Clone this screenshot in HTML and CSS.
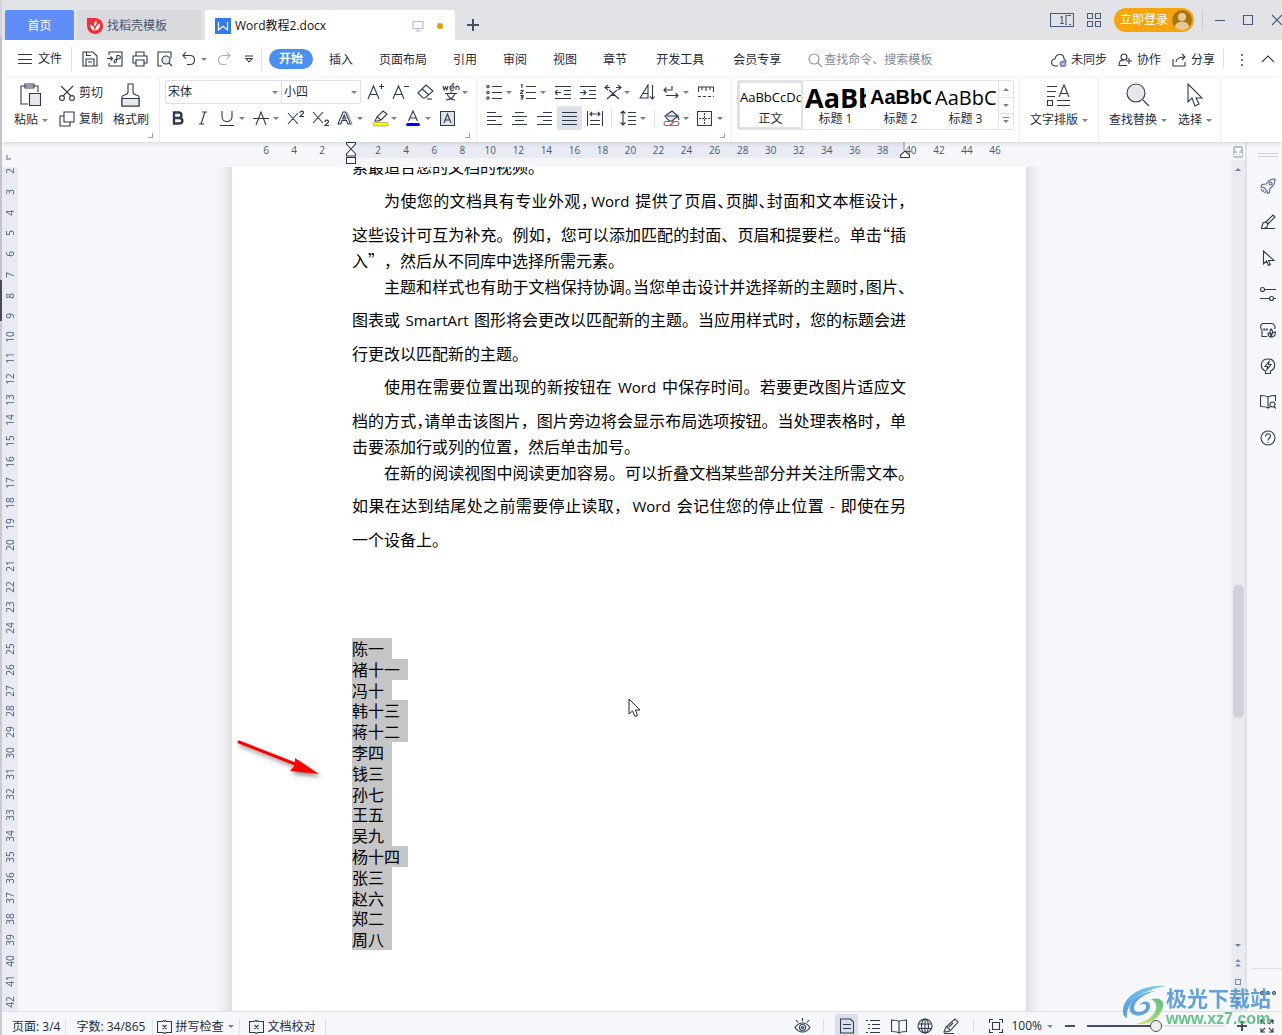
FILE: index.html
```html
<!DOCTYPE html>
<html lang="zh-CN">
<head>
<meta charset="utf-8">
<title>Word教程2.docx</title>
<meta name="viewport" content="width=device-width, initial-scale=1">
<link rel="stylesheet" href="styles.css">
</head>
<body>
<div class="app">

<header class="titlebar">
  <nav class="tabs" aria-label="文档标签">
    <button class="tab tab-home">首页</button>
    <button class="tab tab-store">
      <svg class="logo" width="16" height="16" viewBox="0 0 16 16"><path d="M0 0h8a8 8 0 1 1-8 8z" fill="#fa2c37"/><path d="M7.600 13C4.500 12 3 9.600 3.400 6.600 6 7.500 7.600 9.600 7.600 13zM8.300 12.600C8.300 9.500 9.600 7 13 5.300c.4 4-1.300 6.500-4.700 7.300zM7.600 8.600C6.600 6 7.200 3.800 9.200 2.600c1 2.400.4 4.400-1.600 6z" fill="#fff"/></svg>
      <span>找稻壳模板</span>
    </button>
    <button class="tab tab-doc">
      <svg class="logo" width="16" height="16" viewBox="0 0 16 16"><rect width="16" height="16" fill="#2f7bf0"/><path d="M3.500 4v8l4.500-3.700 4.500 3.700V4" fill="none" stroke="#fff" stroke-width="1.200"/></svg>
      <span class="doc-name">Word教程2.docx</span>
      <svg class="i screen" width="12" height="12" viewBox="0 0 12 12"><path d="M1 1.500h10v7H1zM6 8.500V11M3.500 11h5"/></svg>
      <span class="unsaved"></span>
    </button>
    <button class="new-tab" aria-label="新建标签"><svg class="i bold-line" width="12" height="12" viewBox="0 0 12 12"><path d="M6 0v12M0 6h12"/></svg></button>
  </nav>
  <div class="window-tools">
    <button class="bare" aria-label="窗口排列"><svg class="i" width="24" height="14" viewBox="0 0 24 14"><path d="M.5.500h23v13H.5zM17 2.500h-1v9h1M21 2.500h-3.500M21 11.500h-2M10.500 4.500l1.500-1v7M10 10.500h4"/></svg></button>
    <button class="bare" aria-label="应用"><svg class="i" width="14" height="14" viewBox="0 0 14 14"><path d="M.5.500h5v5h-5zM8.500.500h5v5h-5zM.5 8.500h5v5h-5zM8.500 8.500h5v5h-5z"/></svg></button>
    <button class="login"><span>立即登录</span>
      <svg width="20" height="20" viewBox="0 0 20 20"><circle cx="10" cy="10" r="10" fill="#a8740c"/><circle cx="10" cy="7" r="4" fill="#e6c893"/><path d="M3 17c0-7 14-7 14 0-4 4-10 4-14 0z" fill="#e6c893"/></svg></button>
    <span class="win-sep"></span>
    <button class="win" aria-label="最小化"><svg class="i" width="12" height="12" viewBox="0 0 12 12"><path d="M1 6.500h10"/></svg></button>
    <button class="win" aria-label="最大化"><svg class="i" width="12" height="12" viewBox="0 0 12 12"><path d="M1.500 1.500h9v9h-9z"/></svg></button>
    <button class="win" aria-label="关闭"><svg class="i" width="12" height="12" viewBox="0 0 12 12"><path d="M1 1l10 10M11 1L1 11"/></svg></button>
  </div>
</header>

<div class="menubar">
  <button class="file-menu"><svg class="i" width="14" height="12" viewBox="0 0 14 12"><path d="M0 1.500h14M0 6.500h14M0 10.500h14"/></svg><span>文件</span></button>
  <div class="quick">
    <button class="tool" aria-label="保存"><svg class="i" width="16" height="16" viewBox="0 0 16 16"><path d="M1 1h10l4 4v10H1zM4 15V8h8v7M4.500 1v3.500H9M6 11h4"/></svg></button>
    <button class="tool" aria-label="输出为PDF"><svg class="i" width="16" height="16" viewBox="0 0 16 16"><path d="M2 4V1h13v14H2v-3M0 7.500h5.500M3.500 5.500l2 2-2 2M7.500 12c2 0 2.500-4 2.500-7.500h1.500c2.500 0 2.500 3.500 0 3.500C8 8 6 9.500 7.500 12"/></svg></button>
    <button class="tool" aria-label="打印"><svg class="i" width="16" height="16" viewBox="0 0 16 16"><path d="M4 5V1h8v4M4 12H1V5h14v7h-3M4 9h8v6H4z"/></svg></button>
    <button class="tool" aria-label="打印预览"><svg class="i" width="16" height="16" viewBox="0 0 16 16"><path d="M5 15H1V1h13v6"/><circle cx="9" cy="9" r="4" fill="#e6e8ec"/><path d="M12 12l3 3"/></svg></button>
    <button class="tool split" aria-label="撤销"><svg class="i" width="16" height="16" viewBox="0 0 16 16"><path d="M5 1L2 4.500 5 8M2 4.500h7c6 0 6 9 0 9H6"/></svg><span class="caret"></span></button>
    <button class="tool muted" aria-label="恢复"><svg class="i" width="16" height="16" viewBox="0 0 16 16"><path d="M11 1l3 3.500L11 8M14 4.500H7c-6 0-6 9 0 9h3"/></svg></button>
    <button class="tool" aria-label="更多"><svg class="i" width="10" height="8" viewBox="0 0 10 8"><path d="M1 1h8M2 3.500h6L5 7z"/></svg></button>
  </div>
  <nav class="ribbon-tabs" aria-label="功能区">
    <button class="active">开始</button><button>插入</button><button>页面布局</button><button>引用</button><button>审阅</button><button>视图</button><button>章节</button><button class="spaced">开发工具</button><button class="spaced">会员专享</button>
  </nav>
  <label class="search"><svg class="i" width="14" height="14" viewBox="0 0 14 14"><circle cx="6" cy="6" r="5"/><path d="M10 10l4 4"/></svg><input type="search" placeholder="查找命令、搜索模板" aria-label="查找命令、搜索模板"></label>
  <div class="share-tools">
    <button><svg class="i" width="16" height="14" viewBox="0 0 16 14"><path d="M7 13H4c-5-1-4-7 0-7C5 0 13 0 13 6c1 .500 2 1.500 2 3"/><circle cx="12" cy="11" r="3.500" fill="#7d8db0" stroke="none"/><path d="M10.500 11h3" stroke="#fff"/></svg><span>未同步</span></button>
    <button><svg class="i" width="15" height="14" viewBox="0 0 15 14"><circle cx="6" cy="4" r="3"/><path d="M9 12.500H1c0-5 2-5.500 5-5.500M11 5v6M8 8h6"/></svg><span>协作</span></button>
    <button><svg class="i" width="15" height="14" viewBox="0 0 15 14"><path d="M1 6v7h12V9M4 9c0-3 3-5 9-5M10 1l3 3-3 3"/></svg><span>分享</span></button>
    <button class="more" aria-label="更多选项"><svg width="2" height="12" viewBox="0 0 2 12"><path d="M0 0h2v2H0zM0 5h2v2H0zM0 10h2v2H0z" fill="#707a8c"/></svg></button>
    <button class="collapse" aria-label="收起功能区"><svg class="i" width="14" height="8" viewBox="0 0 14 8"><path d="M1 7l6-6 6 6"/></svg></button>
  </div>
</div>

<div class="ribbon">
  <section class="group clipboard">
    <button class="big"><svg class="i" width="22" height="24" viewBox="0 0 22 24"><path d="M8 21H1V3h17v6M5 1h9v4H5z"/><path d="M9.500 10.500h11v12h-11z" fill="#e6e8ec"/></svg><span class="cap">粘贴<i class="caret"></i></span></button>
    <div class="stack">
      <button class="labelled"><svg class="i" width="16" height="16" viewBox="0 0 16 16"><path d="M2 1l10 10M14 1L4 11"/><circle cx="3" cy="13" r="2.400"/><circle cx="13" cy="13" r="2.400"/></svg><span>剪切</span></button>
      <button class="labelled"><svg class="i" width="16" height="16" viewBox="0 0 16 16"><path d="M5 1h10v10H5zM5 5H1v10h10v-4"/></svg><span>复制</span></button>
    </div>
    <button class="big"><svg class="i" width="20" height="24" viewBox="0 0 20 24"><path d="M1 23V14c0-3 6-1 6-5V1h5v8c0 4 6 2 6 5v9z"/><path d="M1 15.500h17V23H1z" fill="#e6e8ec"/></svg><span class="cap">格式刷</span></button>
    <span class="corner"></span>
  </section>

  <section class="group font">
    <div class="row">
      <span class="combo face"><select aria-label="字体"><option>宋体</option></select><i class="caret"></i></span><span class="combo size"><select aria-label="字号"><option>小四</option></select><i class="caret"></i></span>
      <span class="combo-gap"></span>
      <button class="tool" aria-label="增大字号"><svg class="i" width="18" height="18" viewBox="0 0 18 18"><path d="M1 16L6.500 3 12 16M3 11.500h7M12 3.500h5M14.500 1v5"/></svg></button>
      <button class="tool" aria-label="减小字号"><svg class="i" width="18" height="18" viewBox="0 0 18 18"><path d="M1 16L6.500 3 12 16M3 11.500h7M12 3.500h5"/></svg></button>
      <button class="tool" aria-label="清除格式"><svg class="i" width="18" height="16" viewBox="0 0 18 16"><path d="M1 9l8-8 7 6-8 7H6z"/><path d="M5 5l7 6" /><path d="M10 15h5"/></svg></button>
      <button class="tool split" aria-label="拼音指南"><svg class="i" width="18" height="18" viewBox="0 0 18 18"><path d="M1 3l1.200 4 1.300-3 1.300 3L6 3M8 5h4c0-3-4-3-4 0s2 2.500 4 2M10 2l2-2M14 7V3M14 4c1-1.500 3-1 3 1v2M3 10.500h12M9 8.500v2M5 10.500c1 3 4 6 8 6.500M13 10.500c-1 3-4 6-9 6.500"/></svg><i class="caret"></i></button>
    </div>
    <div class="row">
      <button class="tool" aria-label="加粗"><svg class="i" width="14" height="14" viewBox="0 0 14 14"><path d="M3 1.500h4.500c4 0 4 5.500 0 5.500H3zM3 7h5c4.500 0 4.500 5.500 0 5.500H3z" stroke-width="2.400"/></svg></button>
      <button class="tool" aria-label="倾斜"><svg class="i" width="14" height="14" viewBox="0 0 14 14"><path d="M6 1h5M3 13h5M9 1L5 13"/></svg></button>
      <button class="tool split" aria-label="下划线"><svg class="i" width="16" height="16" viewBox="0 0 16 16"><path d="M3 1v6c0 6 10 6 10 0V1M1 15.500h14"/></svg><i class="caret"></i></button>
      <button class="tool split" aria-label="删除线"><svg class="i" width="16" height="16" viewBox="0 0 16 16"><path d="M3 15L8 2l5 13M0 8.500h16"/></svg><i class="caret"></i></button>
      <button class="tool" aria-label="上标"><svg class="i" width="18" height="16" viewBox="0 0 18 16"><path d="M1 3l10 11M11 3L1 14M13 3c0-3 4-2 3.500 0L13 6.500h4"/></svg></button>
      <button class="tool" aria-label="下标"><svg class="i" width="18" height="16" viewBox="0 0 18 16"><path d="M1 2l10 11M11 2L1 13M13 12c0-3 4-2 3.500 0L13 15.500h4"/></svg></button>
      <button class="tool split" aria-label="文字效果"><svg class="i" width="16" height="16" viewBox="0 0 16 16"><path d="M1 14L6 2h2.500l5 12h-2.700l-1.300-3.500H5L3.700 14zM7.200 5L5.700 9h3z"/><path d="M10 2l5 12h-2" stroke="#9aa3b5"/></svg><i class="caret"></i></button>
      <button class="tool split" aria-label="突出显示"><svg class="i" width="18" height="17" viewBox="0 0 18 17"><path d="M4 11l2-4 6-6 4 3-6 6-3 1zM6 7l4 3" /><rect x="2" y="12.500" width="15" height="3.500" rx="1.500" fill="#ff0" stroke="#8c8c2a" stroke-width=".6"/></svg><i class="caret"></i></button>
      <button class="tool split" aria-label="字体颜色"><svg class="i" width="16" height="17" viewBox="0 0 16 17"><path d="M3.500 11L8 1l4.500 10M5 8h6"/><rect x="1" y="13" width="14" height="3" rx="1.500" fill="#00f" stroke="none"/></svg><i class="caret"></i></button>
      <button class="tool" aria-label="字符底纹"><svg class="i" width="15" height="15" viewBox="0 0 15 15"><path d="M.5.500h14v14H.5z" fill="#dfe2e8"/><path d="M4 12l3.500-9L11 12M5.500 9h4"/></svg></button>
    </div>
    <span class="corner"></span>
  </section>

  <section class="group para">
    <div class="row">
      <button class="tool split" aria-label="项目符号"><svg class="i" width="16" height="16" viewBox="0 0 16 16"><path d="M6 2.500h10M6 8.500h10M6 14.500h10"/><circle cx="2" cy="2.500" r="1.200"/><circle cx="2" cy="8.500" r="1.200"/><circle cx="2" cy="14" r="1.200"/></svg><i class="caret"></i></button>
      <button class="tool split" aria-label="编号"><svg class="i" width="16" height="16" viewBox="0 0 16 16"><path d="M6 2.500h10M6 8.500h10M6 14.500h10M1 1.500l1-1V4M.5 6.500H3l-2.500 3H3M.5 11.500H3l-1.500 1.500H3l-.5 2H.5"/></svg><i class="caret"></i></button>
      <button class="tool" aria-label="减少缩进"><svg class="i" width="16" height="14" viewBox="0 0 16 14"><path d="M0 1.500h16M9 5.500h7M9 9.500h7M0 13.500h16M6 7.500H0M2.500 5L0 7.500 2.500 10"/></svg></button>
      <button class="tool" aria-label="增加缩进"><svg class="i" width="16" height="14" viewBox="0 0 16 14"><path d="M0 1.500h16M9 5.500h7M9 9.500h7M0 13.500h16M0 7.500h6M3.500 5L6 7.500 3.500 10"/></svg></button>
      <button class="tool split" aria-label="中文版式"><svg class="i" width="18" height="16" viewBox="0 0 18 16"><path d="M4 1L1 3.500 4 6M1 3.500h5M14 1l3 2.500L14 6M17 3.500h-5M13 6L3 15M5 6l10 9M6 11.500h6"/></svg><i class="caret"></i></button>
      <button class="tool" aria-label="排序"><svg class="i" width="16" height="16" viewBox="0 0 16 16"><path d="M1 14L9 1v13zM4 9.500h5M13.500 1v14M11 12.500l2.500 2.500 2-2.500"/></svg></button>
      <button class="tool split" aria-label="换行"><svg class="i" width="16" height="14" viewBox="0 0 16 14"><path d="M9 1v4H1M3.500 2.500L1 5l2.500 2.500M3 10.500h12M12.500 8l2.500 2.500-2.500 2.500"/></svg><i class="caret"></i></button>
      <button class="tool" aria-label="制表位"><svg class="i" width="16" height="12" viewBox="0 0 16 12"><path d="M.5 6V1h15v5M4 1v3M8 1v4M12 1v3"/><path d="M0 10.500h16" stroke-dasharray="3 2"/></svg></button>
    </div>
    <div class="row">
      <button class="tool" aria-label="左对齐"><svg class="i" width="15" height="14" viewBox="0 0 15 14"><path d="M0 1.500h9M0 5.500h15M0 9.500h9M0 13.500h15"/></svg></button>
      <button class="tool" aria-label="居中"><svg class="i" width="15" height="14" viewBox="0 0 15 14"><path d="M3 1.500h9M0 5.500h15M3 9.500h9M0 13.500h15"/></svg></button>
      <button class="tool" aria-label="右对齐"><svg class="i" width="15" height="14" viewBox="0 0 15 14"><path d="M6 1.500h9M0 5.500h15M6 9.500h9M0 13.500h15"/></svg></button>
      <button class="tool pressed" aria-label="两端对齐" aria-pressed="true"><svg class="i" width="15" height="14" viewBox="0 0 15 14"><path d="M0 1.500h15M0 5.500h15M0 9.500h15M0 13.500h15"/></svg></button>
      <button class="tool" aria-label="分散对齐"><svg class="i" width="16" height="15" viewBox="0 0 16 15"><path d="M.5 0v15M15.500 0v15M3 3h10M5 1L3 3l2 2M11 1l2 2-2 2M3 9.500h10M3 13.500h10"/></svg></button>
      <span class="mini-sep"></span>
      <button class="tool split" aria-label="行距"><svg class="i" width="16" height="16" viewBox="0 0 16 16"><path d="M3 1v14M.5 3.500L3 1l2.500 2.500M.5 12.500L3 15l2.500-2.500M8 2.500h8M8 6.500h8M8 10.500h8M8 14.500h8"/></svg><i class="caret"></i></button>
      <span class="mini-sep"></span>
      <button class="tool split" aria-label="底纹颜色"><svg class="i" width="18" height="16" viewBox="0 0 18 16"><path d="M2 6l7-5 6 5-6 5H6zM4 6h11l1 4" fill="#e6e8ec"/><rect x="1" y="11.500" width="15" height="4" rx="2" fill="#fff" stroke="#777"/><path d="M7 15l4-3" stroke="#f33"/></svg><i class="caret"></i></button>
      <button class="tool split" aria-label="边框"><svg class="i" width="15" height="15" viewBox="0 0 15 15"><path d="M.5.500h14v14H.5z"/><path d="M7.500 2v11M2 7.500h11" stroke-dasharray="2 1"/></svg><i class="caret"></i></button>
    </div>
    <span class="corner"></span>
  </section>

  <section class="group styles">
    <div class="gallery">
      <button class="card chosen"><span class="sample s0">AaBbCcDd</span><span class="card-name">正文</span></button>
      <button class="card"><span class="sample s1">AaBb</span><span class="card-name">标题 1</span></button>
      <button class="card"><span class="sample s2">AaBbC</span><span class="card-name">标题 2</span></button>
      <button class="card"><span class="sample s3">AaBbC</span><span class="card-name">标题 3</span></button>
      <div class="scroller">
        <button aria-label="上一行"><i class="caret up"></i></button><button aria-label="下一行"><i class="caret"></i></button><button aria-label="展开样式"><i class="caret lined"></i></button>
      </div>
    </div>
  </section>

  <section class="group layout">
    <button class="big"><svg class="i" width="24" height="24" viewBox="0 0 24 24"><path d="M0 3.500h10M0 8.500h9M0 13.500h8M.5 17.500h5v5h-5zM10 17.500h13M10 22.500h13M12 14l5-12 5 12M14 10.500h6"/></svg><span class="cap">文字排版<i class="caret"></i></span></button>
  </section>
  <section class="group find">
    <button class="big"><svg class="i" width="24" height="24" viewBox="0 0 24 24"><circle cx="10" cy="10" r="9" fill="#e6e8ec"/><path d="M17 17l6 6"/></svg><span class="cap">查找替换<i class="caret"></i></span></button>
    <button class="big"><svg class="i" width="16" height="24" viewBox="0 0 16 24"><path d="M1 1v18l4-4 3 8 4-2-3-6h6z"/></svg><span class="cap">选择<i class="caret"></i></span></button>
  </section>
</div>

<div class="body">
  <div class="canvas">
    <div class="hruler">
      <span class="tab-stop"></span>
      <div class="hscale">
        <span>6</span><span>4</span><span>2</span><span></span><span>2</span><span>4</span><span>6</span><span>8</span><span>10</span><span>12</span><span>14</span><span>16</span><span>18</span><span>20</span><span>22</span><span>24</span><span>26</span><span>28</span><span>30</span><span>32</span><span>34</span><span>36</span><span>38</span><span>40</span><span>42</span><span>44</span><span>46</span>
        <svg class="i indent-left" width="10" height="22" viewBox="0 0 10 22"><path d="M.5.500h9V2L5 7 .5 2zM5 7l4.500 5v2h-9v-2zM.5 15.500h9v6h-9z" fill="#fff"/></svg>
        <svg class="i indent-right" width="10" height="16" viewBox="0 0 10 16"><path d="M4 0v8" stroke="#8a94a8"/><path d="M5 9l4.500 4v2.500h-9V13z" fill="#fff"/></svg>
      </div>
    </div>
    <div class="viewport">
      <div class="vruler">
        <div class="vscale"><span>2</span><span>3</span><span>4</span><span>5</span><span>6</span><span>7</span><span>8</span><span>9</span><span>10</span><span>11</span><span>12</span><span>13</span><span>14</span><span>15</span><span>16</span><span>17</span><span>18</span><span>19</span><span>20</span><span>21</span><span>22</span><span>23</span><span>24</span><span>25</span><span>26</span><span>27</span><span>28</span><span>29</span><span>30</span><span>31</span><span>32</span><span>33</span><span>34</span><span>35</span><span>36</span><span>37</span><span>38</span><span>39</span><span>40</span><span>41</span><span>42</span></div>
      </div>
      <main class="desk">
        <article class="page">
          <p><span class="line last">索最适合您的文档的视频。</span></p>
          <p>
            <span class="line tall first tight">为使您的文档具有专业外观，<span class="lat">Word</span> 提供了页眉、页脚、封面和文本框设计，</span>
            <span class="line tall">这些设计可互为补充。例如，您可以添加匹配的封面、页眉和提要栏。单击<span class="tight">“</span>插</span>
            <span class="line last">入”，然后从不同库中选择所需元素。</span>
          </p>
          <p>
            <span class="line first tight">主题和样式也有助于文档保持协调。当您单击设计并选择新的主题时，图片、</span>
            <span class="line tall mixed">图表或 <span class="lat">SmartArt</span> 图形将会更改以匹配新的主题。当应用样式时，您的标题会进</span>
            <span class="line tall last">行更改以匹配新的主题。</span>
          </p>
          <p>
            <span class="line tall mixed first">使用在需要位置出现的新按钮在 <span class="lat">Word</span> 中保存时间。若要更改图片适应文</span>
            <span class="line tall">档的方式<span class="tight">，</span>请单击该图片，图片旁边将会显示布局选项按钮。当处理表格时，单</span>
            <span class="line last">击要添加行或列的位置，然后单击加号。</span>
          </p>
          <p>
            <span class="line first">在新的阅读视图中阅读更加容易。可以折叠文档某些部分并关注所需文本<span class="tight">。</span></span>
            <span class="line tall mixed">如果在达到结尾处之前需要停止读取，<span class="lat">Word</span> 会记住您的停止位置 <span class="lat">-</span> 即使在另</span>
            <span class="line tall last">一个设备上。</span>
          </p>
          <ul class="names">
            <li>陈一</li><li>褚十一</li><li>冯十</li><li>韩十三</li><li>蒋十二</li><li>李四</li><li>钱三</li><li>孙七</li><li>王五</li><li>吴九</li><li>杨十四</li><li>张三</li><li>赵六</li><li>郑二</li><li>周八</li>
          </ul>
          <svg class="arrow" width="90" height="46" viewBox="0 0 90 46"><path d="M6 4L62 26" stroke="#f00" stroke-width="3" stroke-linecap="round"/><path d="M86 36L62 20v7l-5 6z" fill="#f00"/></svg>
          <svg class="pointer" width="13" height="20" viewBox="0 0 13 20"><path d="M1 1v15l3.500-3L7 18.500l2.500-1L7.500 12H12z" fill="#fff" stroke="#223"/></svg>
        </article>
      </main>
    </div>
  </div>
  <div class="scrollbar">
    <svg width="10" height="12" viewBox="0 0 10 12"><rect width="10" height="12" rx="2" fill="#b5bfd6"/><path d="M2 2h6v2L6 5.500v1.500h3v3H1V7h3V5.500L2 4z" fill="#fff"/><path d="M3.500 8v1M6.500 8v1" stroke="#b5bfd6"/></svg>
    <div class="track">
      <i class="caret up"></i>
      <div class="thumb"></div>
      <div class="jump">
        <i class="caret"></i>
        <svg width="6" height="8" viewBox="0 0 6 8"><path d="M3 0l3 3H0zM3 4.500l3 3H0z" fill="#7d8aa8"/></svg>
        <svg class="i pale" width="6" height="6" viewBox="0 0 6 6"><path d="M.5.500h5v5h-5z"/></svg>
        <svg width="6" height="8" viewBox="0 0 6 8"><path d="M3 3.500L0 .500h6zM3 8L0 5h6z" fill="#7d8aa8"/></svg>
      </div>
    </div>
  </div>
  <aside class="side">
    <span class="grip"></span>
    <button aria-label="快捷"><svg class="i blue" width="16" height="16" viewBox="0 0 16 16"><path d="M15 1c-5 0-7 2-9 5L2 6.500 1 9l3 .5L7 13l.5 2.500 2-1L10 10.500c3-2 5-4.500 5-9.500zM4 12l-2 2M2 11l-1 1M6 13.500L4.500 15"/><circle cx="10.500" cy="5.500" r="1.500"/></svg></button>
    <button aria-label="样式"><svg class="i" width="16" height="16" viewBox="0 0 16 16"><path d="M1 14.500h14M1.500 14L3 9l3-1 2 2-1 3-3 1.500M6 8l7-7 2 2-7 7"/></svg></button>
    <button aria-label="选择窗格"><svg class="i" width="16" height="16" viewBox="0 0 16 16"><path d="M3.500 1v13l3-3 2 4.500 2-1-2-4H14z"/></svg></button>
    <button aria-label="设置"><svg class="i" width="16" height="16" viewBox="0 0 16 16"><circle cx="2.500" cy="3.500" r="2"/><path d="M4.500 3.500H16M0 12.500h9M13.500 12.500H16"/><circle cx="11.500" cy="12.500" r="2"/></svg></button>
    <button aria-label="素材"><svg class="i" width="16" height="16" viewBox="0 0 16 16"><path d="M7 14.500H2V8C0 7 0 2 3 1.500h9c3 .500 3.500 4 2.500 5.500M4 6v2h3V6"/><path d="M8 11c3 0 3 2 3 4-2 0-3-2-3-4zM15.500 10c-3 0-4 2-4 5 3 0 4-2 4-5zM11 7c-2 2-1 4 .500 5C13 11 13 9 11 7z"/></svg></button>
    <button aria-label="智能"><svg class="i" width="16" height="16" viewBox="0 0 16 16"><path d="M5.500 13C-1 10 .5 1 8 1s9 9 2.500 12v2.500h-5zM9 3.500L5 8.500h2.500L7 11.500l4-5H8.500z"/></svg></button>
    <button aria-label="阅读"><svg class="i" width="16" height="16" viewBox="0 0 16 16"><path d="M8 3C6 1.500 3 1.500.5 1.500v11c3 0 5.500 0 7.500 1.500zM8 3c2-1.500 5-1.500 7.500-1.500V7M8 14l2-1"/><circle cx="12.500" cy="10.500" r="2.500"/><path d="M14 12.500l2 2"/></svg></button>
    <button aria-label="帮助"><svg class="i" width="16" height="16" viewBox="0 0 16 16"><circle cx="8" cy="8" r="7"/><path d="M5.500 6.500c0-3.500 5-3.500 5-.5 0 2-2.500 2-2.500 4.500M8 12v1"/></svg></button>
    <button class="dots" aria-label="更多"><svg class="i" width="16" height="4" viewBox="0 0 16 4"><circle cx="2" cy="2" r="1.400"/><circle cx="8" cy="2" r="1.400"/><circle cx="14" cy="2" r="1.400"/></svg></button>
  </aside>
</div>

<footer class="status">
  <button class="stat">页面: 3/4</button>
  <button class="stat">字数: 34/865</button>
  <button class="stat icon-stat"><svg class="i" width="15" height="14" viewBox="0 0 15 14"><path d="M6 1.500H.5v11H6l1.500 1 1.500-1h5.500v-11H9M5.500 5l4 4M9.500 5l-4 4M6 0l1.500 1.500L9 0"/></svg>拼写检查<i class="caret"></i></button>
  <button class="stat icon-stat"><svg class="i" width="15" height="14" viewBox="0 0 15 14"><path d="M6 1.500H.5v11H6l1.500 1 1.500-1h5.500v-11H9M5.500 5l4 4M9.500 5l-4 4M6 0l1.500 1.500L9 0"/></svg>文档校对</button>
  <div class="views">
    <button class="view" aria-label="护眼模式"><svg class="i" width="17" height="16" viewBox="0 0 17 16"><path d="M1 9.500c4-6 11-6 15 0-4 6-11 6-15 0zM8.500 0v3M2 2l2 2.500M15 2l-2 2.500"/><circle cx="8.500" cy="9.500" r="3"/><circle cx="8.500" cy="9.500" r="1"/></svg></button>
    <span class="view-sep"></span>
    <button class="view on" aria-label="页面视图"><svg class="i" width="14" height="16" viewBox="0 0 14 16"><path d="M.5 1h10L13.500 4v11H.5zM3 6.500h8M3 10.500h8"/></svg></button>
    <button class="view" aria-label="大纲"><svg class="i" width="14" height="14" viewBox="0 0 14 14"><path d="M0 1.500h2M4 1.500h10M2 5.500h2M6 5.500h8M2 9.500h2M6 9.500h8M0 13.500h2M4 13.500h10"/></svg></button>
    <button class="view" aria-label="阅读版式"><svg class="i" width="16" height="15" viewBox="0 0 16 15"><path d="M8 2.500C6 1 3 1 .5 1v11.500c3 0 5.500 0 7.500 1.500 2-1.500 5-1.500 7.500-1.500V1C13 1 10 1 8 2.500zM8 2.500V14"/></svg></button>
    <button class="view" aria-label="Web版式"><svg class="i" width="16" height="16" viewBox="0 0 16 16"><circle cx="8" cy="8" r="7"/><ellipse cx="8" cy="8" rx="3.500" ry="7"/><path d="M8 1v14M1 6h14M1 10.500h14"/></svg></button>
    <button class="view" aria-label="写作模式"><svg class="i" width="16" height="16" viewBox="0 0 16 16"><path d="M1 14l2-5 9-8 3 3-8 9-5 1zM4 9l3 3M10 5l-4 4M1 15.500h10"/></svg></button>
    <span class="view-sep wide"></span>
    <button class="view" aria-label="适应页面"><svg class="i" width="14" height="14" viewBox="0 0 14 14"><path d="M.5 4V.500H4M10 .500h3.500V4M13.500 10v3.500H10M4 13.500H.5V10M3.500 3.500h7v7h-7z"/></svg></button>
    <button class="zoom">100%<i class="caret"></i></button>
    <button class="step" aria-label="缩小"><svg class="i bold-line" width="10" height="10" viewBox="0 0 10 10"><path d="M0 5h10"/></svg></button>
    <input class="slider" type="range" min="0" max="200" value="100" aria-label="缩放">
    <button class="step" aria-label="放大"><svg class="i bold-line" width="10" height="10" viewBox="0 0 10 10"><path d="M0 5h10M5 0v10"/></svg></button>
    <button class="view full" aria-label="全屏"><svg class="i" width="14" height="14" viewBox="0 0 14 14"><path d="M1 5V1h4M9 1h4v4M13 9v4H9M5 13H1V9M1 1l4 4M13 1L9 5M13 13L9 9M1 13l4-4"/></svg></button>
  </div>
</footer>

<div class="watermark">
  <svg width="44" height="42" viewBox="0 0 44 42">
    <defs><linearGradient id="wa" x1="0" y1="1" x2="1" y2="0"><stop offset="0" stop-color="#3e8fd8"/><stop offset="1" stop-color="#5ec8f0"/></linearGradient><linearGradient id="wb" x1="0" y1="1" x2="1" y2="0"><stop offset="0" stop-color="#d9e84a"/><stop offset="1" stop-color="#3fb56c"/></linearGradient></defs>
    <path d="M44 1C20-1 0 12 1 27c0 3 1 5 4 6C3 20 18 5 44 1z" fill="url(#wa)"/>
    <path d="M33 6C22 9 12 16 12 23c0 6 11 5 12-1 1-3-3-4-6-2 2-5 11-5 10 2-1 9-17 12-20 4C6 17 19 7 33 6z" fill="#4b93d3"/>
    <path d="M29 14c8-2 13 1 12 7-2 12-14 20-29 18 10-1 20-7 22-15 1-5-1-8-5-10z" fill="url(#wb)"/>
  </svg>
  <div class="mark-text"><span class="mark-cn">极光下载站</span><span class="mark-url">www.xz7.com</span></div>
</div>
</div>
</body>
</html>
```
FILE: styles.css
```css
* { box-sizing: border-box; }

body {
  margin: 0;
  padding-left: 2px;
  background: linear-gradient(#d4d4d4 0 36px, #c4c4c4 36px 280px, #4a4a4e 280px 321px, #cbcbcb 321px);
  color: #1f2a3d;
  font: 12px/16px "Open Sans", "Noto Sans CJK SC", sans-serif;
}

button {
  display: flex;
  align-items: center;
  margin: 0;
  padding: 0;
  border: 0;
  background: none;
  color: inherit;
  font: inherit;
  white-space: nowrap;
}

.app {
  position: relative;
  display: flex;
  flex-direction: column;
  height: 100vh;
  overflow: hidden;
  background: #f5f7fa;
}

.i {
  display: block;
  flex: none;
  fill: none;
  stroke: #2f3a50;
  stroke-width: 1.1;
}
.bold-line { stroke-width: 2; stroke: #44506a; }
.blue { stroke: #53688f; }
.pale { stroke: #7d8aa8; }

.caret {
  flex: none;
  width: 0;
  border: 3px solid transparent;
  border-top-color: #75809a;
  border-bottom: 0;
}
.caret.up { border-top: 0; border-bottom: 3px solid #75809a; }
.caret.lined { position: relative; }
.caret.lined::before {
  content: "";
  position: absolute;
  left: -3px;
  top: -6px;
  width: 6px;
  height: 1px;
  background: #75809a;
}

/* Title bar */
.titlebar {
  display: flex;
  flex: none;
  justify-content: space-between;
  height: 40px;
  background: #e2e3e7;
}
.tabs { display: flex; align-items: flex-end; gap: 3px; padding-left: 3px; }
.tab { height: 30px; padding-top: 2px; border-radius: 2px 2px 0 0; }
.tab-home { width: 69px; justify-content: center; background: #5f8dfa; color: #fff; }
.tab-store { width: 125px; padding-left: 10px; gap: 4px; background: #d9dade; color: #4a5468; }
.tab-doc { width: 250px; padding-left: 10px; padding-right: 12px; gap: 4px; background: #fff; color: #111; }
.doc-name { flex: 1; text-align: left; }
.screen { stroke: #b0bace; }
.unsaved { width: 6px; height: 6px; margin-left: 9px; border-radius: 50%; background: #e89a0c; }
.new-tab { height: 30px; padding: 0 9px; }

.window-tools { display: flex; align-items: center; }
.window-tools .i { stroke: #4a5a7c; }
.bare { margin-right: 13px; }
.login {
  width: 80px;
  height: 24px;
  padding: 0 2px 0 6px;
  justify-content: space-between;
  border-radius: 12px;
  background: #f6a60c;
  color: #fff;
}
.win-sep { width: 1px; height: 20px; margin: 0 3px 0 8px; background: #cccfd6; }
.win { width: 28px; height: 28px; justify-content: center; }
.win:last-child { width: 20px; padding-left: 9px; overflow: hidden; justify-content: flex-start; }

/* Menu bar */
.menubar { display: flex; flex: none; align-items: center; height: 38px; background: #fff; }
.file-menu { gap: 6px; padding: 0 9px 0 16px; height: 24px; border-right: 1px solid #dfe1e6; }
.quick { display: flex; padding: 0 0 0 5px; height: 24px; border-right: 1px solid #dfe1e6; }
.tool { flex: none; width: 25px; height: 24px; justify-content: center; }
.tool.split { width: 34px; padding-left: 4px; justify-content: flex-start; }
.tool.split .i { margin-right: auto; }
.tool.split .caret { margin-right: 4px; }
.tool.pressed { background: #dde1e8; border-radius: 2px; }
.muted { opacity: .4; }
.ribbon-tabs { display: flex; padding-left: 7px; gap: 3px; }
.ribbon-tabs button { height: 20px; padding: 1px 11px 0 12px; }
.ribbon-tabs .active { padding: 0 10px; background: #4a90f0; color: #fff; font-weight: 700; border-radius: 10px; }
.ribbon-tabs .active + button { margin-left: 1px; }
.ribbon-tabs .spaced { margin-left: 3px; }
.search { display: flex; align-items: center; gap: 2px; margin-left: 16px; padding-top: 1px; }
.search .i { stroke: #8590a8; }
.search input {
  width: 130px;
  padding: 0;
  border: 0;
  outline: 0;
  background: none;
  font: inherit;
}
.search input::placeholder { color: #8089a0; }
.share-tools { display: flex; align-items: center; gap: 11px; margin-left: auto; }
.share-tools button { gap: 4px; height: 20px; padding-top: 1px; }
.share-tools .more { margin-left: -3px; padding-left: 17px; border-left: 1px solid #dfe1e6; }
.share-tools .collapse { padding: 0 7px; }

/* Ribbon */
.ribbon {
  position: relative;
  z-index: 2;
  display: flex;
  flex: none;
  height: 64px;
  background: #fff;
  box-shadow: 0 1px 4px rgba(40, 50, 70, .18);
}
.group {
  position: relative;
  flex: none;
  padding-top: 2px;
  border-right: 1px solid #eceef1;
}
.row { display: flex; align-items: center; height: 24px; margin-bottom: 2px; }
.corner {
  position: absolute;
  right: 6px;
  bottom: 4px;
  width: 5px;
  height: 5px;
  border: solid #9aa2b2;
  border-width: 0 1px 1px 0;
}
.big { flex-direction: column; height: 50px; }
.big .i { margin: 3px 0 auto; }
.cap { display: flex; align-items: center; gap: 4px; height: 20px; }
.clipboard { display: flex; width: 158px; padding-left: 12px; }
.clipboard .stack { margin: 0 10px 0 11px; }
.labelled { gap: 4px; height: 24px; margin-bottom: 2px; padding-top: 1px; }

.font { width: 317px; padding-left: 5px; }
.combo {
  display: flex;
  align-items: center;
  height: 24px;
  border: 1px solid #dcdfe5;
  padding-right: 3px;
}
.combo select {
  flex: 1;
  width: 0;
  appearance: none;
  padding: 0 2px;
  border: 0;
  outline: 0;
  background: none;
  color: inherit;
  font: inherit;
}
.face { width: 117px; border-radius: 2px 0 0 2px; }
.size { width: 79px; border-left: 0; border-radius: 0 2px 2px 0; }
.combo-gap { width: 2px; }

.para { width: 255px; padding-left: 5px; }
.mini-sep { flex: none; width: 1px; height: 18px; margin: 0 4px; background: #dfe1e6; }

.styles { width: 288px; padding-left: 5px; }
.gallery { display: flex; width: 277px; height: 50px; border: 1px solid #e1e3e8; border-radius: 2px; }
.card { flex: 1; min-width: 0; flex-direction: column; overflow: hidden; border: 2px solid transparent; }
.card.chosen { border-color: #dfe1e6; }
.sample { display: block; width: 100%; height: 29px; overflow: hidden; color: #000; text-align: left; }
.card-name { height: 16px; }
.s0 { font: 400 13px/29px "Open Sans", sans-serif; }
.s1 { font: 700 27px/29px "Open Sans", sans-serif; }
.s2 { font: 700 20px/29px "Liberation Sans", sans-serif; }
.s3 { font: 400 20px/29px "Open Sans", sans-serif; }
.scroller { width: 15px; border-left: 1px solid #e1e3e8; }
.scroller button { width: 100%; height: 16px; justify-content: center; }
.scroller button + button { border-top: 1px solid #e1e3e8; }

.layout { width: 79px; padding-left: 10px; }
.find { display: flex; gap: 11px; width: 122px; padding-left: 10px; }

/* Work area */
.body { display: flex; flex: 1; min-height: 0; }
.canvas { display: flex; flex: 1; flex-direction: column; min-width: 0; }
.hruler { display: flex; flex: none; height: 25px; padding-left: 4px; }
.tab-stop { width: 5px; height: 5px; margin: 13px 19px 0 0; border: solid #a9b0bd; border-width: 0 0 2px 2px; }
.hscale {
  position: relative;
  display: grid;
  grid-template-columns: repeat(27, 1fr);
  width: 757px;
  height: 16px;
  margin: 0 auto;
  background: linear-gradient(90deg, transparent 99px, #e8ebf3 99px 653px, transparent 653px);
  color: #4b5871;
  font-size: 10px;
  text-align: center;
}
.indent-left { position: absolute; left: 94px; top: 0; }
.indent-right { position: absolute; left: 648px; top: 0; }

.viewport { display: flex; flex: 1; min-height: 0; overflow: hidden; }
.vruler { flex: none; width: 16px; overflow: hidden; background: #e8ebf3; }
.vscale {
  display: grid;
  grid-auto-rows: 1fr;
  height: 852px;
  margin-top: -6px;
  color: #4b5871;
  font-size: 10px;
  text-align: center;
}
.vscale span { writing-mode: vertical-rl; transform: rotate(180deg); line-height: 16px; }

.desk { flex: 1; min-width: 0; overflow: hidden; padding-left: 9px; }
.page {
  position: relative;
  width: 794px;
  height: 1123px;
  margin: -14px auto 0;
  padding: 0 120px;
  background: #fff;
  box-shadow: 0 0 16px rgba(0, 0, 0, .2);
  color: #000;
  font: 16px/26px "Noto Sans CJK SC", sans-serif;
  text-spacing-trim: space-all;
}
.page p { margin: 0; }
.line { display: block; text-align: justify; text-align-last: justify; white-space: nowrap; }
.line.tall { padding-top: 8px; }
.line.mixed { padding-top: 7px; }
.line.first { padding-left: 32px; }
.line.last { text-align-last: left; }
.tight { font-feature-settings: "halt"; }
.lat { margin: 0 2px; font: 15px/16px "Open Sans", sans-serif; }

.names {
  display: grid;
  grid-auto-rows: 1fr;
  justify-items: start;
  height: 312px;
  margin: 86px 0 0;
  padding: 0;
  list-style: none;
  line-height: 20px;
}
.names li { padding-right: 8px; background: #c6c6c6; }

.arrow { position: absolute; left: 1px; top: 585px; fill: none; filter: drop-shadow(2px 3px 2px rgba(0, 0, 0, .45)); }
.pointer { position: absolute; left: 396px; top: 545px; }

.scrollbar { display: flex; flex: none; flex-direction: column; align-items: center; width: 14px; padding-top: 4px; gap: 2px; }
.scrollbar > svg { flex: none; }
.track { display: flex; flex: 1; flex-direction: column; align-items: center; width: 100%; padding-top: 8px; background: #e9ebf1; }
.thumb { flex: none; width: 11px; height: 133px; margin-top: 414px; border-radius: 5px; background: #cfd2dc; }
.jump { display: flex; flex-direction: column; align-items: center; gap: 12px; margin-top: auto; padding-bottom: 6px; }

.side {
  display: flex;
  flex: none;
  flex-direction: column;
  align-items: center;
  width: 37px;
  padding: 11px 0 0 6px;
  border-left: 2px solid #e1e3ec;
}
.side button { height: 36px; }
.grip { flex: none; width: 20px; height: 4px; margin-bottom: 11px; border: solid #cfd2d8; border-width: 1px 0; }
.side .dots { width: 34px; height: 43px; margin-top: auto; border-top: 1px solid #dfe1e6; padding: 6px 9px 0 9px; }

/* Status bar */
.status {
  display: flex;
  flex: none;
  align-items: flex-start;
  height: 24px;
  overflow: hidden;
  border-top: 1px solid #dfe1e6;
}
.stat { position: relative; height: 28px; padding: 1px 6px 0 10px; }
.stat::after { content: ""; position: absolute; right: 0; top: 7px; width: 1px; height: 16px; background: #dfe1e6; }
.stat + .stat { padding-right: 8px; }
.stat + .icon-stat { gap: 3px; padding: 1px 6px 0 4px; }
.icon-stat + .icon-stat { padding: 1px 11px 0 9px; }
.icon-stat .caret { margin-left: 2px; }
.views { display: flex; align-items: center; height: 28px; margin-left: auto; padding-right: 2px; }
.view { width: 26px; height: 24px; justify-content: center; }
.view.on { width: 23px; margin-right: 2px; background: #dbdfe7; border-radius: 2px; }
.view.full { margin-left: 7px; }
.view-sep { width: 1px; height: 14px; margin: 0 11px 0 8px; background: #dfe1e6; }
.view-sep.wide { margin: 0 9px; }
.zoom { gap: 5px; margin: 0 12px 0 2px; }
.step { width: 10px; height: 20px; }
.slider { appearance: none; width: 138px; height: 20px; margin: 0 12px; background: none; }
.slider::-webkit-slider-runnable-track { height: 2px; background: linear-gradient(90deg, #44506a 50%, #dfe2e9 50%); }
.slider::-webkit-slider-thumb { appearance: none; width: 12px; height: 12px; margin-top: -5px; border: 1px solid #555; border-radius: 50%; background: #eee; }

/* Site mark laid over the corner */
.watermark { position: absolute; right: 11px; bottom: 7px; z-index: 3; display: flex; align-items: center; pointer-events: none; opacity: .85; }
.mark-text { display: flex; flex-direction: column; }
.mark-cn { color: #4b93d3; font: 700 21px/26px "Noto Sans CJK SC", sans-serif; }
.mark-url { color: #4cba72; font: 700 16px/18px "Liberation Sans", sans-serif; }
```
